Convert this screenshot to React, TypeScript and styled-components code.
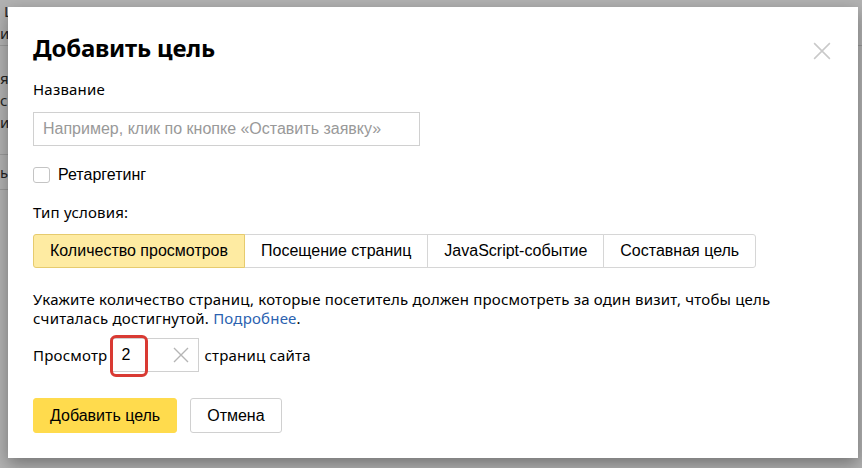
import React from "react";
import styled, { createGlobalStyle } from "styled-components";

const GlobalStyle = createGlobalStyle`
  html, body {
    margin: 0;
    padding: 0;
    width: 862px;
    height: 468px;
    overflow: hidden;
    background: #fff;
  }
`;

const Page = styled.div`
  position: relative;
  width: 862px;
  height: 468px;
  overflow: hidden;
  font-family: "Noto Sans", "Liberation Sans", sans-serif;
`;

const BackPage = styled.div`
  display: flex;
  flex-direction: column;
  color: #333;
  font-size: 15px;
`;

const BackRow = styled.div<{ $h: number; $narrow?: boolean }>`
  height: ${(p) => p.$h}px;
  width: ${(p) => (p.$narrow ? "8px" : "auto")};
  overflow: hidden;
  border-bottom: 1px solid #ddd;
  display: flex;
  flex-direction: column;
  justify-content: ${(p) => (p.$narrow ? "center" : "flex-start")};
  line-height: 22px;
  white-space: nowrap;
`;

const Overlay = styled.div`
  position: absolute;
  inset: 0;
  background: rgba(0, 0, 0, 0.3);
`;

const Modal = styled.div`
  position: absolute;
  left: 8px;
  top: 7px;
  width: 850px;
  height: 451px;
  box-sizing: border-box;
  background: #fff;
  box-shadow: 0 6px 16px rgba(0, 0, 0, 0.35);
  padding: 26px 25px 0 25px;
  color: #000;
`;

const CloseButton = styled.button`
  position: absolute;
  top: 27px;
  right: 19px;
  width: 34px;
  height: 34px;
  border: 0;
  background: transparent;
  padding: 0;
  cursor: pointer;
  display: flex;
  align-items: center;
  justify-content: center;
`;

const Title = styled.h2`
  margin: 0;
  font-family: "Noto Sans", sans-serif;
  font-size: 24px;
  font-weight: 700;
  line-height: 30px;
  letter-spacing: -0.2px;
`;

const Label = styled.div<{ $mt: number }>`
  margin-top: ${(p) => p.$mt}px;
  font-size: 15px;
  line-height: 20px;
  letter-spacing: 0.2px;
`;

const TextInput = styled.input`
  display: block;
  margin-top: 13px;
  width: 387px;
  height: 34px;
  box-sizing: border-box;
  border: 1px solid #d0d0d0;
  padding: 0 9px;
  font-family: "Liberation Sans", Arial, sans-serif;
  font-size: 16px;
  outline: none;
  &::placeholder {
    color: #999;
  }
`;

const CheckRow = styled.label`
  margin-top: 20px;
  display: flex;
  align-items: center;
  gap: 8px;
  font-family: "Liberation Sans", Arial, sans-serif;
  font-size: 16px;
  line-height: 18px;
`;

const Box = styled.span`
  width: 17px;
  height: 16px;
  box-sizing: border-box;
  border: 1px solid #c4c4c4;
  border-radius: 3px;
  background: #fff;
`;

const Tabs = styled.div`
  margin-top: 12px;
  display: flex;
`;

const Tab = styled.button<{ $active?: boolean }>`
  height: 34px;
  padding: 0 16px;
  margin-left: -1px;
  border: 1px solid ${(p) => (p.$active ? "#e6cb6e" : "#d6d6d6")};
  background: ${(p) => (p.$active ? "#feeba2" : "#fff")};
  position: relative;
  z-index: ${(p) => (p.$active ? 1 : 0)};
  font-family: "Liberation Sans", Arial, sans-serif;
  font-size: 16px;
  color: #000;
  &:first-child {
    margin-left: 0;
    border-radius: 3px 0 0 3px;
  }
  &:last-child {
    border-radius: 0 3px 3px 0;
  }
`;

const Description = styled.p`
  margin: 22px 0 0;
  font-size: 15px;
  line-height: 19px;
  letter-spacing: 0.2px;
  width: 780px;
`;

const Link = styled.a`
  color: #2b62b0;
  text-decoration: none;
`;

const ViewsRow = styled.div`
  margin-top: 10px;
  display: flex;
  align-items: center;
  font-size: 15px;
  letter-spacing: 0.2px;
`;

const NumberField = styled.div`
  position: relative;
  width: 89px;
  height: 34px;
  margin: 0 5px 0 3px;
  box-sizing: border-box;
  border: 1px solid #d0d0d0;
  display: flex;
  align-items: center;
  justify-content: space-between;
  padding: 0 9px 0 10px;
  font-family: "Liberation Sans", Arial, sans-serif;
  font-size: 16px;
`;

const Highlight = styled.span`
  position: absolute;
  left: -1px;
  top: -4px;
  width: 38px;
  height: 42px;
  box-sizing: border-box;
  border: 3px solid #d93a33;
  border-radius: 6px;
`;

const Actions = styled.div`
  margin-top: 26px;
  display: flex;
  gap: 13px;
`;

const Button = styled.button<{ $primary?: boolean }>`
  height: 35px;
  padding: 0 16px;
  border-radius: 3px;
  border: 1px solid ${(p) => (p.$primary ? "#ffdb4d" : "#d0d0d0")};
  background: ${(p) => (p.$primary ? "#ffdb4d" : "#fff")};
  font-family: "Liberation Sans", Arial, sans-serif;
  font-size: 16px;
  color: #000;
`;

const Cross = ({ size, color }: { size: number; color: string }) => (
  <svg width={size} height={size} viewBox="0 0 16 16">
    <path d="M1 1 L15 15 M15 1 L1 15" stroke={color} strokeWidth="1.4" fill="none" />
  </svg>
);

export default function App() {
  return (
    <Page>
      <GlobalStyle />
      <BackPage>
        <BackRow $h={45}>
          <span>&nbsp;Цели &nbsp; Условие &nbsp; Конверсия &nbsp; Тип &nbsp; Визиты</span>
          <span>ил</span>
        </BackRow>
        <BackRow $h={108} $narrow>
          <span>я</span>
          <span>с</span>
          <span>и</span>
        </BackRow>
        <BackRow $h={34} $narrow>
          ы
        </BackRow>
      </BackPage>
      <Overlay />
      <Modal>
        <CloseButton>
          <Cross size={18} color="#c9c9c9" />
        </CloseButton>
        <Title>Добавить цель</Title>
        <Label $mt={16}>Название</Label>
        <TextInput placeholder="Например, клик по кнопке «Оставить заявку»" />
        <CheckRow>
          <Box />
          Ретаргетинг
        </CheckRow>
        <Label $mt={18}>Тип условия:</Label>
        <Tabs>
          <Tab $active>Количество просмотров</Tab>
          <Tab>Посещение страниц</Tab>
          <Tab>JavaScript-событие</Tab>
          <Tab>Составная цель</Tab>
        </Tabs>
        <Description>
          Укажите количество страниц, которые посетитель должен просмотреть за один визит, чтобы цель
          <br />
          считалась достигнутой. <Link href="#">Подробнее</Link>.
        </Description>
        <ViewsRow>
          Просмотр
          <NumberField>
            <Highlight />
            <span>2</span>
            <Cross size={16} color="#b5b5b5" />
          </NumberField>
          страниц сайта
        </ViewsRow>
        <Actions>
          <Button $primary>Добавить цель</Button>
          <Button>Отмена</Button>
        </Actions>
      </Modal>
    </Page>
  );
}
